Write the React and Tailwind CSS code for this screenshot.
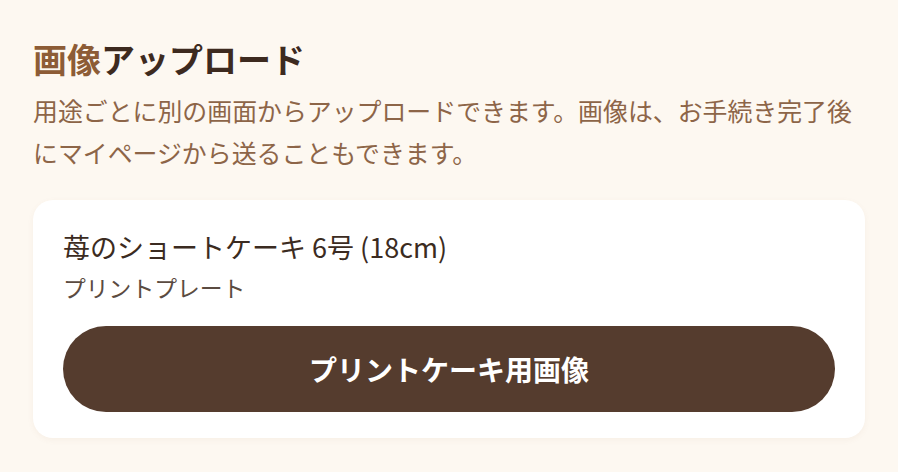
export default function App() {
  return (
    <div
      className="min-h-screen bg-[#fdf8f1] px-[33px] pt-[34px]"
      style={{ fontFamily: '"Noto Sans CJK JP", "Noto Sans", sans-serif' }}
    >
      <h1 className="text-[34px] leading-[50px] font-bold text-[#3d2a1f]">
        <span className="text-[#8d5c36]">画像</span>アップロード
      </h1>
      <p className="mt-[5px] text-[24.9px] leading-[42px] text-[#8d6548]">
        用途ごとに別の画面からアップロードできます。画像は、お手続き完了後にマイページから送ることもできます。
      </p>
      <div className="mt-[27px] bg-white rounded-[20px] px-[30px] pt-[28px] pb-[26px] shadow-[0_2px_6px_rgba(150,110,60,0.06)]">
        <div className="text-[27px] leading-[38px] text-[#3b2b21]">苺のショートケーキ 6号 (18cm)</div>
        <div className="mt-[6px] text-[22.8px] leading-[32px] text-[#5b4b41]">プリントプレート</div>
        <button className="mt-[22px] w-full h-[86px] rounded-full bg-[#553c2e] text-white text-[28px] font-bold">
          プリントケーキ用画像
        </button>
      </div>
    </div>
  );
}
